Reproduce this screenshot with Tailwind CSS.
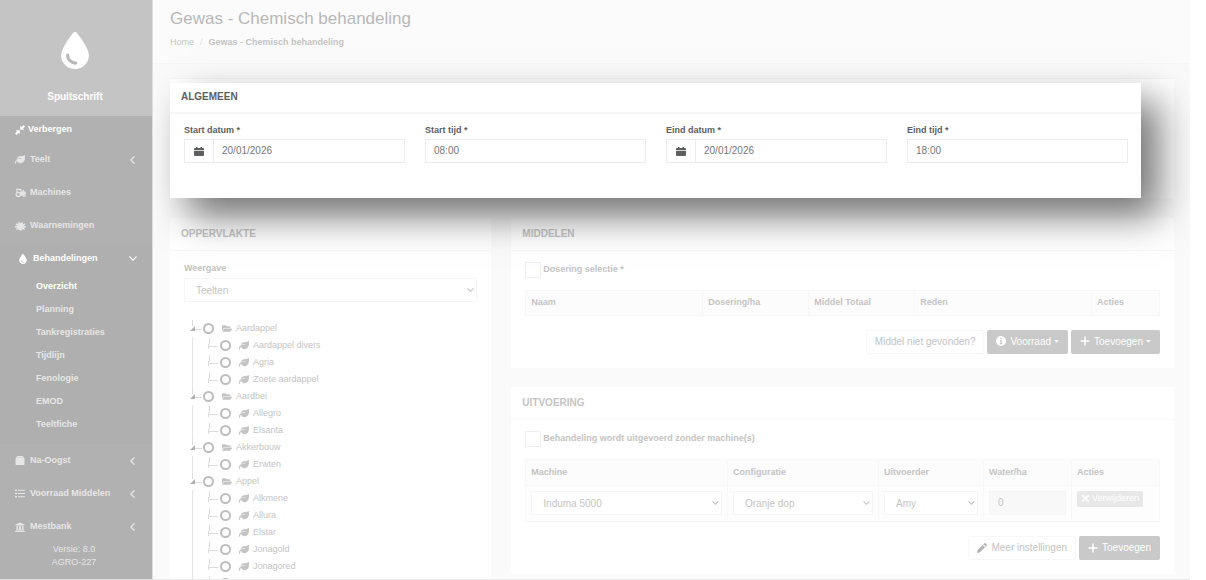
<!DOCTYPE html>
<html lang="nl">
  <head>
    <meta charset="UTF-8" />
    <meta name="viewport" content="width=device-width, initial-scale=1.0" />
    <title>Gewas - Chemisch behandeling</title>
    <script src="https://cdn.jsdelivr.net/npm/@tailwindcss/browser@4"></script>
  </head>
  <body class="flex h-screen overflow-hidden bg-white pr-4 font-['Liberation_Sans',Arial,sans-serif] text-[9px] text-[#c4c4c4]">
    <!-- icons -->
    <svg class="hidden">
      <symbol id="drop" viewBox="0 0 384 512">
        <path fill="currentColor" d="M192 512C86 512 0 426 0 320C0 228.8 130.2 57.7 166.6 11.7C172.6 4.2 181.5 0 191.1 0h1.8c9.6 0 18.5 4.2 24.5 11.7C253.8 57.7 384 228.8 384 320c0 106-86 192-192 192z" />
        <path fill="none" stroke="#b9b9b9" stroke-width="44" stroke-linecap="round" d="M90 318c0 62 46 110 112 112" />
      </symbol>
      <symbol id="leaf" viewBox="0 40 512 450">
        <path fill="currentColor" stroke="currentColor" stroke-width="16" d="M272 96c-78.6 0-145.1 51.5-167.7 122.5c33.6-17 71.5-26.5 111.7-26.5h88c8.8 0 16 7.2 16 16s-7.2 16-16 16H216c-16.6 0-32.7 1.9-48.3 5.4c-25.9 5.9-49.9 16.4-71.4 30.7C38.3 298.8 0 364.9 0 440v16c0 13.3 10.7 24 24 24s24-10.7 24-24V440c0-48.7 20.7-92.5 53.8-123.2C121.6 392.3 190.3 448 272 448l1 0c132.1-.7 239-130.9 239-291.4c0-42.6-7.5-83.1-21.1-119.6c-2.600-6.900-12.700-6.600-16.200-.1C455.900 72.100 418.700 96 376 96L272 96z" />
      </symbol>
      <symbol id="folder" viewBox="0 0 576 512">
        <path fill="currentColor" d="M572.694 292.093L500.27 416.248A63.997 63.997 0 0 1 444.989 448H45.025c-18.523 0-30.064-20.093-20.731-36.093l72.424-124.155A64 64 0 0 1 152 256h399.964c18.523 0 30.064 20.093 20.73 36.093zM152 224h328v-48c0-26.51-21.49-48-48-48H272l-64-64H48C21.49 64 0 85.49 0 112v278.046l69.077-118.418C86.214 242.25 117.989 224 152 224z" />
      </symbol>
      <symbol id="calendar" viewBox="0 0 20 18">
        <path fill="currentColor" d="M4 0h3v2h6V0h3v2h2a2 2 0 0 1 2 2v2H0V4a2 2 0 0 1 2-2h2zM0 7.500h20V16a2 2 0 0 1-2 2H2a2 2 0 0 1-2-2z" />
      </symbol>
      <symbol id="compress" viewBox="0 0 20 20">
        <path fill="currentColor" d="M10.500 1.500v8h8l-2.500-2.500L20 3 17 0l-4 4zM9.500 18.500v-8h-8L4 13 0 17l3 3 4-4z" />
      </symbol>
      <symbol id="tractor" viewBox="0 0 24 20">
        <g fill="none" stroke="currentColor">
          <circle cx="7" cy="13" r="4.500" stroke-width="3" />
          <circle cx="20" cy="15" r="2.500" stroke-width="2.500" />
          <path stroke-width="2.500" d="M4 8V2h8l2 6h8v4M18 8V3" />
        </g>
        <path fill="currentColor" d="M11 8h11v5h-4l-2 3h-4z" />
      </symbol>
      <symbol id="bug" viewBox="0 0 22 20">
        <path fill="currentColor" d="M6 6l1-5 3 3h2l3-3 1 5v8c0 3-2 5-5 5s-5-2-5-5z" />
        <path fill="none" stroke="currentColor" stroke-width="3" d="M7 9L2 6M15 9l5-3M0 11.500h22M7 13l-4 4M15 13l4 4" />
      </symbol>
      <symbol id="box" viewBox="0 0 18 18">
        <path fill="currentColor" d="M4 0h10l3 3H1zM0 5h18v11a2 2 0 0 1-2 2H2a2 2 0 0 1-2-2zM1 3.500h16V6H1z" />
      </symbol>
      <symbol id="list" viewBox="0 0 20 18">
        <path fill="currentColor" d="M0 1h4v3H0zM6 1.500h14v2H6zM0 7.500h4v3H0zM6 8h14v2H6zM0 14h4v3H0zM6 14.500h14v2H6z" />
      </symbol>
      <symbol id="bank" viewBox="0 0 20 20">
        <path fill="currentColor" d="M10 1l9 4v2H1V5zM3 8h3v7h2V8h4v7h2V8h3v7h1v2H2v-2h1zM0 18h20v2H0z" />
      </symbol>
      <symbol id="plus" viewBox="0 0 10 10">
        <path fill="none" stroke="currentColor" stroke-width="1.500" stroke-linecap="round" d="M5 1v8M1 5h8" />
      </symbol>
      <symbol id="cross" viewBox="0 0 10 10">
        <path fill="none" stroke="currentColor" stroke-width="2" stroke-linecap="round" d="M2 2l6 6M8 2L2 8" />
      </symbol>
      <symbol id="info" viewBox="0 0 12 12">
        <circle cx="6" cy="6" r="6" fill="currentColor" />
        <path stroke="#c9c9c9" stroke-width="1.500" fill="none" d="M6 2.500v1.500M5 5.500h1v3M4.500 9h3" />
      </symbol>
      <symbol id="pencil" viewBox="0 0 12 12">
        <path fill="currentColor" d="M0 12l.8-3.500L7 2.300l2.700 2.700-6.200 6.200zM7.700 1.600L8.800.5c.6-.6 1.300-.6 1.800 0l.9.9c.6.5.6 1.200 0 1.800l-1.100 1.100z" />
      </symbol>
      <symbol id="chevron" viewBox="0 0 10 6">
        <path fill="none" stroke="currentColor" stroke-width="1.600" stroke-linecap="round" stroke-linejoin="round" d="M1 1l4 4 4-4" />
      </symbol>
      <symbol id="angle" viewBox="0 0 6 10">
        <path fill="none" stroke="currentColor" stroke-width="1.600" stroke-linecap="round" stroke-linejoin="round" d="M5 1L1 5l4 4" />
      </symbol>
      <symbol id="caret" viewBox="0 0 6 4">
        <path fill="currentColor" d="M0 0h6L3 3.500z" />
      </symbol>
      <symbol id="branch-open" viewBox="0 0 12 17">
        <path stroke="#dcdcdc" d="M2.500 0v6M5 9.500h7" />
        <path fill="#b0b0b0" d="M0 11h5V6z" />
      </symbol>
      <symbol id="branch" viewBox="0 0 12 17">
        <path fill="none" stroke="#dcdcdc" d="M2.500 1v6M1.500 7v5M2 9.500h9" />
      </symbol>
    </svg>

    <aside class="flex w-[153px] shrink-0 flex-col border-r border-b border-[#dedede] bg-[#b1b1b1] font-bold text-[#e6e6e6]">
      <div class="flex h-[116px] shrink-0 flex-col items-center bg-[#c4c4c4] pt-8 pr-[2px] text-[10px] text-white">
        <svg class="h-[37px] w-7"><use href="#drop" /></svg>
        <span class="mt-5 leading-4">Spuitschrift</span>
      </div>
      <nav>
        <a href="#" class="flex h-[27px] items-center gap-[3px] pl-[15px] text-white"><svg class="size-[10px]"><use href="#compress" /></svg>Verbergen</a>
        <a href="#" class="flex h-[33px] items-center gap-[5px] pr-[17px] pl-[15px]"><svg class="h-[9px] w-[10px]"><use href="#leaf" /></svg>Teelt<svg class="ml-auto h-2 w-[5px]"><use href="#angle" /></svg></a>
        <a href="#" class="flex h-[33px] items-center gap-1 pl-[15px]"><svg class="h-[10px] w-[11px]"><use href="#tractor" /></svg>Machines</a>
        <a href="#" class="flex h-[33px] items-center gap-1 pl-[15px]"><svg class="h-[10px] w-[11px]"><use href="#bug" /></svg>Waarnemingen</a>
        <div class="bg-[#afafaf] pb-2">
          <a href="#" class="flex h-[33px] items-center gap-[5px] pr-[15px] pl-[18px] text-white"><svg class="size-[10px]"><use href="#drop" /></svg>Behandelingen<svg class="ml-auto h-[5px] w-2"><use href="#chevron" /></svg></a>
          <ul class="pl-9 leading-[23px]">
            <li><a href="#" class="text-white">Overzicht</a></li>
            <li><a href="#">Planning</a></li>
            <li><a href="#">Tankregistraties</a></li>
            <li><a href="#">Tijdlijn</a></li>
            <li><a href="#">Fenologie</a></li>
            <li><a href="#">EMOD</a></li>
            <li><a href="#">Teeltfiche</a></li>
          </ul>
        </div>
        <a href="#" class="flex h-[33px] items-center gap-[5px] pr-[17px] pl-[15px]"><svg class="h-[9px] w-[10px]"><use href="#box" /></svg>Na-Oogst<svg class="ml-auto h-2 w-[5px]"><use href="#angle" /></svg></a>
        <a href="#" class="flex h-[33px] items-center gap-[5px] pr-[17px] pl-[15px]"><svg class="h-[9px] w-[10px]"><use href="#list" /></svg>Voorraad Middelen<svg class="ml-auto h-2 w-[5px]"><use href="#angle" /></svg></a>
        <a href="#" class="flex h-[33px] items-center gap-[5px] pr-[17px] pl-[15px]"><svg class="size-[10px]"><use href="#bank" /></svg>Mestbank<svg class="ml-auto h-2 w-[5px]"><use href="#angle" /></svg></a>
      </nav>
      <p class="pr-1 text-center leading-[13px] font-normal">Versie: 8.0<br />AGRO-227</p>
    </aside>

    <main class="min-w-0 flex-1 overflow-hidden border-b border-[#ebebeb] bg-[#fafafa]">
      <header class="h-16 border-b border-[#f6f6f6] bg-[#fbfbfb] px-[17px] pt-2">
        <h1 class="text-[17px] leading-[22px] text-[#b8b8b8]">Gewas - Chemisch behandeling</h1>
        <nav class="mt-1 flex gap-[6px] leading-4">
          <a href="#">Home</a>
          <span class="text-[#dcdcdc]">/</span>
          <span class="font-bold">Gewas - Chemisch behandeling</span>
        </nav>
      </header>

      <div class="pt-[14px] pr-4 pl-[17px]">
        <!-- algemeen -->
        <div class="border-t border-[#f4f4f4] bg-white pt-1">
          <section class="relative z-10 mr-[33px] h-[115px] bg-white text-[#757779] shadow-[18px_18px_36px_rgba(0,0,0,0.55)]">
            <h2 class="h-[31px] border-b-2 border-[#f6f6f6] px-[11px] text-[10px] leading-[27px] font-bold text-[#5c5e60]">ALGEMEEN</h2>
            <form class="grid grid-cols-4 gap-5 pt-2 pr-[13px] pl-[14px]">
              <div>
                <label for="start-datum" class="mb-px block leading-4 font-bold text-[#5c5e60]">Start datum *</label>
                <div class="flex h-6 border border-[#ececec] text-[10px]">
                  <span class="flex w-7 items-center justify-center text-[#5c5e60]"><svg class="h-[9px] w-[10px]"><use href="#calendar" /></svg></span>
                  <input id="start-datum" type="text" value="20/01/2026" class="min-w-0 flex-1 border-l border-[#ececec] px-2 pb-px" />
                </div>
              </div>
              <div>
                <label for="start-tijd" class="mb-px block leading-4 font-bold text-[#5c5e60]">Start tijd *</label>
                <input id="start-tijd" type="text" value="08:00" class="h-6 w-full border border-[#ececec] px-2 pb-px text-[10px]" />
              </div>
              <div>
                <label for="eind-datum" class="mb-px block leading-4 font-bold text-[#5c5e60]">Eind datum *</label>
                <div class="flex h-6 border border-[#ececec] text-[10px]">
                  <span class="flex w-7 items-center justify-center text-[#5c5e60]"><svg class="h-[9px] w-[10px]"><use href="#calendar" /></svg></span>
                  <input id="eind-datum" type="text" value="20/01/2026" class="min-w-0 flex-1 border-l border-[#ececec] px-2 pb-px" />
                </div>
              </div>
              <div>
                <label for="eind-tijd" class="mb-px block leading-4 font-bold text-[#5c5e60]">Eind tijd *</label>
                <input id="eind-tijd" type="text" value="18:00" class="h-6 w-full border border-[#ececec] px-2 pb-px text-[10px]" />
              </div>
            </form>
          </section>
        </div>

        <div class="mt-5 grid grid-cols-12 gap-5">
          <!-- oppervlakte -->
          <section class="col-span-4 bg-white">
            <h2 class="h-[33px] border-b border-[#f7f7f7] px-[11px] text-[10px] leading-8 font-bold">OPPERVLAKTE</h2>
            <div class="px-[14px] pt-[9px]">
              <label for="weergave" class="mb-[2px] block leading-4 font-bold">Weergave</label>
              <div class="relative">
                <select id="weergave" class="h-6 w-full appearance-none border border-[#f5f5f5] px-[11px] text-[10px]">
                  <option>Teelten</option>
                </select>
                <svg class="pointer-events-none absolute top-[10px] right-[3px] h-1 w-[7px]"><use href="#chevron" /></svg>
              </div>
              <ul id="tree" class="mt-[18px] leading-[17px]"></ul>
            </div>
          </section>

          <div class="col-span-8">
            <!-- middelen -->
            <section class="bg-white pb-[14px]">
              <h2 class="h-[33px] border-b border-[#f7f7f7] px-[11px] text-[10px] leading-8 font-bold">MIDDELEN</h2>
              <div class="px-[14px] pt-[11px]">
                <div class="mb-3 flex h-4 items-center gap-[2px]">
                  <input id="dosering" type="checkbox" class="size-4 appearance-none border border-[#efefef] bg-white" />
                  <label for="dosering" class="font-bold">Dosering selectie *</label>
                </div>
                <table class="w-full table-fixed border-collapse text-left">
                  <thead>
                    <tr class="h-[25px] bg-[#fcfcfc]">
                      <th class="border border-[#f7f7f7] px-[5px]">Naam</th>
                      <th class="w-[106px] border border-[#f7f7f7] px-[5px]">Dosering/ha</th>
                      <th class="w-[106px] border border-[#f7f7f7] px-[5px]">Middel Totaal</th>
                      <th class="border border-[#f7f7f7] px-[5px]">Reden</th>
                      <th class="w-[68px] border border-[#f7f7f7] px-[5px]">Acties</th>
                    </tr>
                  </thead>
                </table>
                <div class="mt-[14px] flex justify-end gap-[3px] text-[10px]">
                  <button class="h-6 rounded-xs border border-[#f7f7f7] px-2 pb-[2px]">Middel niet gevonden?</button>
                  <button class="flex h-6 items-center rounded-xs bg-[#c9c9c9] px-[9px] pb-[2px] text-white"><svg class="mr-1 size-[10px]"><use href="#info" /></svg>Voorraad<svg class="ml-[3px] h-[3px] w-[5px]"><use href="#caret" /></svg></button>
                  <button class="flex h-6 items-center rounded-xs bg-[#c9c9c9] px-[9px] pb-[2px] text-white"><svg class="mr-1 size-[10px]"><use href="#plus" /></svg>Toevoegen<svg class="ml-[3px] h-[3px] w-[5px]"><use href="#caret" /></svg></button>
                </div>
              </div>
            </section>

            <!-- uitvoering -->
            <section class="mt-[19px] bg-white pb-[14px]">
              <h2 class="h-[33px] border-b border-[#f7f7f7] px-[11px] text-[10px] leading-8 font-bold">UITVOERING</h2>
              <div class="px-[14px] pt-[11px]">
                <div class="mb-3 flex h-4 items-center gap-[2px]">
                  <input id="zonder-machine" type="checkbox" class="size-4 appearance-none border border-[#efefef] bg-white" />
                  <label for="zonder-machine" class="font-bold">Behandeling wordt uitgevoerd zonder machine(s)</label>
                </div>
                <table class="w-full table-fixed border-collapse text-left">
                  <thead>
                    <tr class="h-[26px] bg-[#fcfcfc]">
                      <th class="border border-[#f7f7f7] px-[5px]">Machine</th>
                      <th class="w-[151px] border border-[#f7f7f7] px-[5px]">Configuratie</th>
                      <th class="w-[105px] border border-[#f7f7f7] px-[5px]">Uitvoerder</th>
                      <th class="w-[88px] border border-[#f7f7f7] px-[5px]">Water/ha</th>
                      <th class="w-[88px] border border-[#f7f7f7] px-[5px]">Acties</th>
                    </tr>
                  </thead>
                  <tbody>
                    <tr class="h-9 bg-[#fdfdfd] align-top">
                      <td class="border border-[#f7f7f7] p-[5px]">
                        <div class="relative">
                          <select aria-label="Machine" class="block h-6 w-full appearance-none border border-[#f5f5f5] bg-white px-[11px] text-[10px]">
                            <option>Induma 5000</option>
                          </select>
                          <svg class="pointer-events-none absolute top-[10px] right-[3px] h-1 w-[7px]"><use href="#chevron" /></svg>
                        </div>
                      </td>
                      <td class="border border-[#f7f7f7] p-[5px]">
                        <div class="relative">
                          <select aria-label="Configuratie" class="block h-6 w-full appearance-none border border-[#f5f5f5] bg-white px-[11px] text-[10px]">
                            <option>Oranje dop</option>
                          </select>
                          <svg class="pointer-events-none absolute top-[10px] right-[3px] h-1 w-[7px]"><use href="#chevron" /></svg>
                        </div>
                      </td>
                      <td class="border border-[#f7f7f7] p-[5px]">
                        <div class="relative">
                          <select aria-label="Uitvoerder" class="block h-6 w-full appearance-none border border-[#f5f5f5] bg-white px-[11px] text-[10px]">
                            <option>Amy</option>
                          </select>
                          <svg class="pointer-events-none absolute top-[10px] right-[3px] h-1 w-[7px]"><use href="#chevron" /></svg>
                        </div>
                      </td>
                      <td class="border border-[#f7f7f7] p-[5px]">
                        <input type="text" aria-label="Water/ha" value="0" readonly class="block h-6 w-full border border-[#f5f5f5] bg-[#f8f8f8] px-2 pb-px text-[10px]" />
                      </td>
                      <td class="border border-[#f7f7f7] p-[5px]">
                        <button class="flex h-4 items-center gap-[2px] rounded-xs bg-[#e8e8e8] px-1 pb-px text-[9px] text-white"><svg class="size-[9px]"><use href="#cross" /></svg>Verwijderen</button>
                      </td>
                    </tr>
                  </tbody>
                </table>
                <div class="mt-[14px] flex justify-end gap-[3px] text-[10px]">
                  <button class="flex h-6 items-center rounded-xs border border-[#f7f7f7] px-2 pb-px"><svg class="mr-1 size-[10px] text-[#b4b4b4]"><use href="#pencil" /></svg>Meer instellingen</button>
                  <button class="flex h-6 items-center rounded-xs bg-[#c9c9c9] px-[9px] pb-px text-white"><svg class="mr-1 size-[10px]"><use href="#plus" /></svg>Toevoegen</button>
                </div>
              </div>
            </section>
          </div>
        </div>
      </div>
    </main>

    <script>
      const crops = [
        { name: "Aardappel", items: ["Aardappel divers", "Agria", "Zoete aardappel"] },
        { name: "Aardbei", items: ["Allegro", "Elsanta"] },
        { name: "Akkerbouw", items: ["Erwten"] },
        { name: "Appel", items: ["Alkmene", "Allura", "Elstar", "Jonagold", "Jonagored", ""] },
      ];

      function renderRow(name, branch, icon) {
        return `
          <label class="flex h-[17px] items-center">
            <svg class="h-[17px] w-3"><use href="#${branch}" /></svg>
            <input type="radio" name="teelt" class="mr-2 ml-px size-[11px] appearance-none rounded-full border-2 border-[#bdbdbd]" />
            <svg class="mr-1 h-[9px] w-[10px]"><use href="#${icon}" /></svg>${name}
          </label>`;
      }

      document.getElementById("tree").innerHTML = crops
        .map(
          (crop) => `
          <li>
            <div class="pl-[6px]">${renderRow(crop.name, "branch-open", "folder")}</div>
            <ul class="ml-2 border-l border-[#e6e6e6] pl-[14px]">
              ${crop.items.map((item) => `<li>${renderRow(item, "branch", "leaf")}</li>`).join("")}
            </ul>
          </li>`
        )
        .join("");
    </script>
  </body>
</html>
